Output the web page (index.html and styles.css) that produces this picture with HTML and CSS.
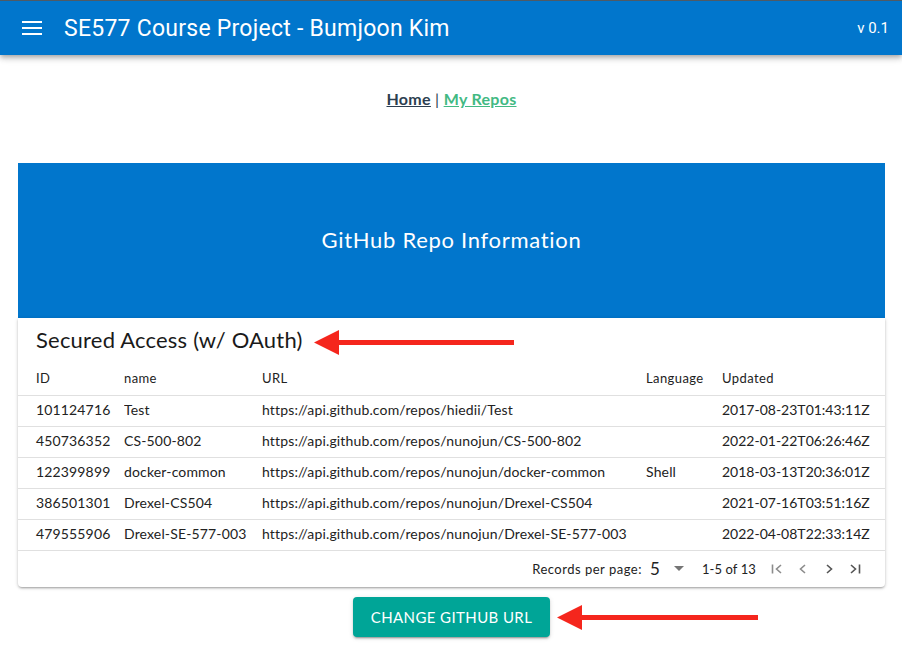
FILE: index.html
```html
<!DOCTYPE html>
<html lang="en">
<head>
<meta charset="utf-8">
<title>SE577 Course Project</title>
<link rel="stylesheet" href="styles.css">
</head>
<body>
<header class="appbar">
  <div class="appbar-left">
    <span class="burger"><span></span><span></span><span></span></span>
    <span class="app-title">SE577 Course Project - Bumjoon Kim</span>
  </div>
  <span class="version">v 0.1</span>
</header>
<main class="main">
  <nav class="nav"><a class="nav-home" href="#">Home</a> <span class="sep">|</span> <a class="nav-repos" href="#">My Repos</a></nav>
  <section class="banner">GitHub Repo Information</section>
  <section class="card">
    <div class="card-title">Secured Access (w/ OAuth)</div>
    <table class="grid">
      <colgroup><col class="c1"><col class="c2"><col class="c3"><col class="c4"><col class="c5"></colgroup>
      <thead>
        <tr><th>ID</th><th>name</th><th>URL</th><th>Language</th><th>Updated</th></tr>
      </thead>
      <tbody>
        <tr><td>101124716</td><td>Test</td><td>https://api.github.com/repos/hiedii/Test</td><td></td><td>2017-08-23T01:43:11Z</td></tr>
        <tr><td>450736352</td><td>CS-500-802</td><td>https://api.github.com/repos/nunojun/CS-500-802</td><td></td><td>2022-01-22T06:26:46Z</td></tr>
        <tr><td>122399899</td><td>docker-common</td><td>https://api.github.com/repos/nunojun/docker-common</td><td>Shell</td><td>2018-03-13T20:36:01Z</td></tr>
        <tr><td>386501301</td><td>Drexel-CS504</td><td>https://api.github.com/repos/nunojun/Drexel-CS504</td><td></td><td>2021-07-16T03:51:16Z</td></tr>
        <tr><td>479555906</td><td>Drexel-SE-577-003</td><td>https://api.github.com/repos/nunojun/Drexel-SE-577-003</td><td></td><td>2022-04-08T22:33:14Z</td></tr>
      </tbody>
    </table>
    <div class="footer">
      <span class="rpp">Records per page:</span>
      <span class="rpp-val">5</span>
      <span class="caret"></span>
      <span class="range">1-5 of 13</span>
      <span class="pager">
        <svg width="14" height="14" viewBox="0 0 14 14"><path d="M2.5 2.5v9M11 3L6.5 7l4.5 4" fill="none" stroke="#8c8c8c" stroke-width="1.6"/></svg>
        <svg width="14" height="14" viewBox="0 0 14 14"><path d="M9 3L4.5 7 9 11" fill="none" stroke="#8c8c8c" stroke-width="1.6"/></svg>
        <svg width="14" height="14" viewBox="0 0 14 14"><path d="M5 3l4.5 4L5 11" fill="none" stroke="#555" stroke-width="1.6"/></svg>
        <svg width="14" height="14" viewBox="0 0 14 14"><path d="M3 3l4.5 4L3 11M11.5 2.5v9" fill="none" stroke="#555" stroke-width="1.6"/></svg>
      </span>
    </div>
  </section>
  <div class="actions"><button class="btn">CHANGE GITHUB URL</button></div>
</main>
<svg class="arrow arrow-1" width="202" height="28" viewBox="0 0 202 28"><path d="M24 12h176v5H24z" fill="#f5261d"/><path d="M0 14.5L25 2v25z" fill="#f5261d"/></svg>
<svg class="arrow arrow-2" width="203" height="28" viewBox="0 0 203 28"><path d="M24 12h177v5H24z" fill="#f5261d"/><path d="M0 14.5L25 2v25z" fill="#f5261d"/></svg>
</body>
</html>
```
FILE: styles.css
```css
* { box-sizing: border-box; }
html, body { margin: 0; padding: 0; background: #fff; }
body {
  font-family: Lato, "Open Sans", "Liberation Sans", sans-serif;
  color: #222;
  border-top: 1px solid #4f5a64;
  position: relative;
  min-height: 649px;
}
.appbar {
  height: 54px;
  background: #0176cc;
  color: #fff;
  display: flex;
  align-items: center;
  justify-content: space-between;
  padding: 0 13px 0 22px;
  box-shadow: 0 2px 4px -1px rgba(0,0,0,.2), 0 4px 5px 0 rgba(0,0,0,.14), 0 1px 10px 0 rgba(0,0,0,.12);
  font-family: Roboto, "Liberation Sans", sans-serif;
  position: relative;
  z-index: 2;
}
.appbar-left { display: flex; align-items: center; }
.burger { display: flex; flex-direction: column; gap: 4px; width: 20px; margin-right: 22px; }
.burger span { display: block; height: 2px; background: #fff; }
.app-title { font-size: 23px; letter-spacing: 0.25px; }
.version { font-size: 15px; }
.main { padding: 0 17px 0 18px; }
.nav {
  text-align: center;
  font-weight: 700;
  font-size: 16px;
  letter-spacing: 0.3px;
  color: #2c3e50;
  padding-top: 34px;
  height: 108px;
}
.nav a { text-decoration: underline; }
.nav .sep { font-weight: 400; }
.nav-home { color: #2c3e50; }
.nav-repos { color: #42b983; }
.banner {
  height: 155px;
  background: #0176cc;
  color: #fff;
  display: flex;
  align-items: center;
  justify-content: center;
  font-size: 22px;
  letter-spacing: 0.7px;
  padding-bottom: 3px;
}
.card {
  background: #fff;
  border-radius: 0 0 4px 4px;
  box-shadow: 0 2px 2px -1px rgba(0,0,0,.2), 0 1px 3px 0 rgba(0,0,0,.16), 0 1px 4px 0 rgba(0,0,0,.1);
}
.card-title {
  height: 44px;
  line-height: 44px;
  padding-left: 18px;
  font-size: 22px;
  letter-spacing: 0.2px;
  color: #1a1a1a;
}
.grid { width: 100%; border-collapse: collapse; table-layout: fixed; font-size: 14px; letter-spacing: 0.15px; }
.c1 { width: 106px; } .c2 { width: 138px; } .c3 { width: 384px; } .c4 { width: 76px; } .c5 { width: 163px; }
.grid th, .grid td { text-align: left; padding: 0; white-space: nowrap; overflow: hidden; }
.grid th:first-child, .grid td:first-child { padding-left: 18px; }
.grid th { font-weight: 400; font-size: 13px; letter-spacing: 0.4px; height: 33px; color: #222; border-bottom: 1px solid #e0e0e0; padding-bottom: 1px; }
.grid td { height: 31px; border-bottom: 1px solid #e0e0e0; color: #222; padding-bottom: 2px; }
.grid td:last-child { letter-spacing: 0; }
.footer {
  height: 36px;
  display: flex;
  align-items: center;
  justify-content: flex-end;
  padding-right: 23px;
  font-size: 13px;
  color: #222;
}
.rpp { margin-right: 8px; letter-spacing: 0.5px; }
.rpp-val { font-size: 17px; width: 24px; }
.caret { width: 0; height: 0; border-left: 5px solid transparent; border-right: 5px solid transparent; border-top: 5px solid #757575; margin-right: 18px; }
.range { margin-right: 14px; letter-spacing: 0.1px; }
.pager { display: flex; gap: 12px; align-items: center; }
.pager svg { display: block; }
.actions { display: flex; justify-content: center; padding: 10px 0; }
.btn {
  font-family: Lato, "Open Sans", "Liberation Sans", sans-serif;
  font-size: 15px;
  letter-spacing: 0.4px;
  color: #fff;
  background: #00a597;
  border: 0;
  border-radius: 4px;
  height: 40px;
  padding: 0 18px;
  box-shadow: 0 3px 1px -2px rgba(0,0,0,.2), 0 2px 2px 0 rgba(0,0,0,.14), 0 1px 5px 0 rgba(0,0,0,.12);
}
.arrow { position: absolute; }
.arrow-1 { left: 314px; top: 327px; }
.arrow-2 { left: 557px; top: 602px; }
```
